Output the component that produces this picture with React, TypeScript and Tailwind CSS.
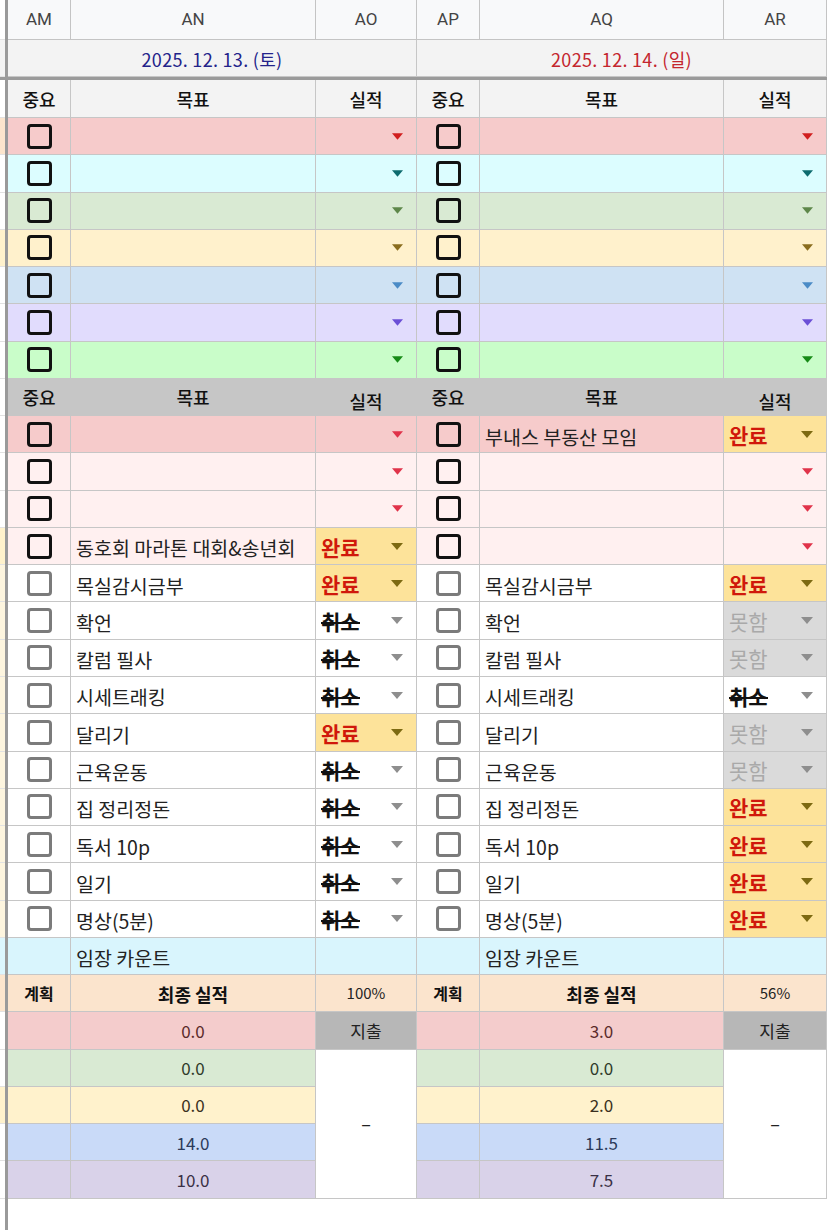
import React from "react";

const B = "border-r border-b border-[#c6c6c6]";

function Arrow({ color, w = 12 }: { color: string; w?: number }) {
  return (
    <svg width={w} height={7} viewBox="0 0 12 7" className="shrink-0">
      <polygon points="0,0 12,0 6,7" fill={color} />
    </svg>
  );
}

function Box({ strong }: { strong: boolean }) {
  return strong ? (
    <div className="w-[25px] h-[25px] border-[3px] border-[#111] rounded-[4px]" />
  ) : (
    <div className="w-[25px] h-[25px] border-[3px] border-[#7b7b7b] rounded-[4px]" />
  );
}

type Status = "완료" | "취소" | "못함" | null;

function StatusCell({ s, bg, arrow }: { s: Status; bg: string; arrow: string }) {
  if (s === "완료")
    return (
      <div className={`${B} bg-[#fde39a] flex items-center justify-between pl-[5px] pr-[13px]`}>
        <span className="text-[21px] font-bold text-[#d0180b] leading-none pt-[2px]">완료</span>
        <Arrow color="#7d6a12" />
      </div>
    );
  if (s === "취소")
    return (
      <div className={`${B} bg-white flex items-center justify-between pl-[5px] pr-[13px]`}>
        <span className="relative text-[21px] font-bold text-[#111] leading-none pt-[2px]">
          취소
          <span className="absolute left-0 right-0 top-[13px] h-[2px] bg-[#111]" />
        </span>
        <Arrow color="#8e8e8e" />
      </div>
    );
  if (s === "못함")
    return (
      <div className={`${B} bg-[#dadada] flex items-center justify-between pl-[5px] pr-[13px]`}>
        <span className="text-[21px] text-[#a9a9a9] leading-none pt-[2px]">못함</span>
        <Arrow color="#8e8e8e" />
      </div>
    );
  return (
    <div className={`${B} ${bg} flex items-center justify-end pr-[13px]`}>
      <Arrow color={arrow} w={11} />
    </div>
  );
}

function Strip({ bg }: { bg: string }) {
  return (
    <>
      <div className={`${bg} border-b border-[#e2e2e2]`} />
      <div className="bg-[#9a9a9a]" />
    </>
  );
}

const colorRows = [
  { bg: "bg-[#f6cbcb]", arrow: "#d11f1f", strip: "bg-[#fce5cd]" },
  { bg: "bg-[#dcfdff]", arrow: "#0e6b6e", strip: "bg-white" },
  { bg: "bg-[#d9ead3]", arrow: "#5e874a", strip: "bg-white" },
  { bg: "bg-[#fff1cc]", arrow: "#8a6d1e", strip: "bg-[#fff2cc]" },
  { bg: "bg-[#cfe2f3]", arrow: "#4b8bc6", strip: "bg-white" },
  { bg: "bg-[#e1dcfd]", arrow: "#6a4fd6", strip: "bg-white" },
  { bg: "bg-[#c9fdc9]", arrow: "#178a17", strip: "bg-white" },
];

type S2 = { bg: string; text: string; status: Status };
const sec2Left: S2[] = [
  { bg: "bg-[#f6cbcb]", text: "", status: null },
  { bg: "bg-[#fff0f0]", text: "", status: null },
  { bg: "bg-[#fff0f0]", text: "", status: null },
  { bg: "bg-[#fff0f0]", text: "동호회 마라톤 대회&송년회", status: "완료" },
];
const sec2Right: S2[] = [
  { bg: "bg-[#f6cbcb]", text: "부내스 부동산 모임", status: "완료" },
  { bg: "bg-[#fff0f0]", text: "", status: null },
  { bg: "bg-[#fff0f0]", text: "", status: null },
  { bg: "bg-[#fff0f0]", text: "", status: null },
];

const habits = ["목실감시금부", "확언", "칼럼 필사", "시세트래킹", "달리기", "근육운동", "집 정리정돈", "독서 10p", "일기", "명상(5분)"];
const leftStatus: Status[] = ["완료", "취소", "취소", "취소", "완료", "취소", "취소", "취소", "취소", "취소"];
const rightStatus: Status[] = ["완료", "못함", "못함", "취소", "못함", "못함", "완료", "완료", "완료", "완료"];

const bottomColors = ["bg-[#f4cccc]", "bg-[#d9ead3]", "bg-[#fff2cc]", "bg-[#c9daf8]", "bg-[#d9d2e9]"];
const bottomText = ["text-[#5a2a2a]", "text-[#2f3a2a]", "text-[#3a3020]", "text-[#2c3a5a]", "text-[#3a3045]"];
const leftNums = ["0.0", "0.0", "0.0", "14.0", "10.0"];
const rightNums = ["3.0", "0.0", "2.0", "11.5", "7.5"];

function HeaderCells({ gray }: { gray: boolean }) {
  const bg = gray ? "bg-[#c6c6c6]" : "bg-[#f3f3f3]";
  const cell = `${B} ${bg} flex items-center justify-center text-[18px] font-medium text-[#111] leading-none`;
  return (
    <>
      {[0, 1].map((d) => (
        <React.Fragment key={d}>
          <div className={cell}>중요</div>
          <div className={cell}>목표</div>
          <div className={`${cell} ${gray ? "pt-[8px]" : ""}`}>실적</div>
        </React.Fragment>
      ))}
    </>
  );
}

export default function App() {
  const letters = ["AM", "AN", "AO", "AP", "AQ", "AR"];
  const textCell = "flex items-center pl-[5px] pt-[4px] text-[19.5px] text-[#222] whitespace-nowrap";
  return (
    <div className="w-[827px] h-[1230px] overflow-hidden bg-white font-['Noto_Sans_CJK_KR','Noto_Sans',sans-serif] text-[#111]">
      <div className="grid grid-cols-[5px_3px_63px_245px_101px_63px_244px_1fr] grid-rows-[40px_37px_3px_38px_repeat(29,37.28px)_31px]">
        {/* column letters */}
        <Strip bg="bg-white" />
        {letters.map((l) => (
          <div key={l} className="border-r border-b border-[#c4c4c4] bg-[#f8f9fa] flex items-center justify-center text-[17px] text-[#444] font-['Roboto',sans-serif]">
            {l}
          </div>
        ))}

        {/* date row */}
        <Strip bg="bg-[#f3f3f3]" />
        <div className={`col-span-3 ${B} bg-[#f3f3f3] flex items-center justify-center text-[18px] tracking-[0.3px] text-[#23238a] pt-[2px]`}>
          2025. 12. 13. (토)
        </div>
        <div className={`col-span-3 ${B} bg-[#f3f3f3] flex items-center justify-center text-[18px] tracking-[0.3px] text-[#c4262e] pt-[2px]`}>
          2025. 12. 14. (일)
        </div>

        {/* thick line */}
        <div className="col-span-8 bg-[#9a9a9a]" />

        {/* header */}
        <Strip bg="bg-white" />
        <HeaderCells gray={false} />

        {/* color rows */}
        {colorRows.map((r, i) => (
          <React.Fragment key={`c${i}`}>
            <Strip bg={r.strip} />
            {[0, 1].map((d) => (
              <React.Fragment key={d}>
                <div className={`${B} ${r.bg} flex items-center justify-center`}>
                  <Box strong />
                </div>
                <div className={`${B} ${r.bg}`} />
                <StatusCell s={null} bg={r.bg} arrow={r.arrow} />
              </React.Fragment>
            ))}
          </React.Fragment>
        ))}

        {/* gray header */}
        <Strip bg="bg-white" />
        <HeaderCells gray />

        {/* section 2 */}
        {sec2Left.map((l, i) => {
          const r = sec2Right[i];
          return (
            <React.Fragment key={`s${i}`}>
              <Strip bg={i === 3 ? "bg-[#fff2cc]" : "bg-white"} />
              {[l, r].map((c, d) => (
                <React.Fragment key={d}>
                  <div className={`${B} ${c.bg} flex items-center justify-center`}>
                    <Box strong />
                  </div>
                  <div className={`${B} ${c.bg} ${textCell}`}>{c.text}</div>
                  <StatusCell s={c.status} bg={c.bg} arrow="#e0334a" />
                </React.Fragment>
              ))}
            </React.Fragment>
          );
        })}

        {/* habits */}
        {habits.map((h, i) => (
          <React.Fragment key={`h${i}`}>
            <Strip bg="bg-[#fdf5df]" />
            {[leftStatus[i], rightStatus[i]].map((s, d) => (
              <React.Fragment key={d}>
                <div className={`${B} bg-white flex items-center justify-center`}>
                  <Box strong={false} />
                </div>
                <div className={`${B} bg-white ${textCell}`}>{h}</div>
                <StatusCell s={s} bg="bg-white" arrow="#8e8e8e" />
              </React.Fragment>
            ))}
          </React.Fragment>
        ))}

        {/* 임장 카운트 */}
        <Strip bg="bg-[#dcf6fd]" />
        {[0, 1].map((d) => (
          <React.Fragment key={`i${d}`}>
            <div className={`${B} bg-[#d9f5fd]`} />
            <div className={`${B} bg-[#d9f5fd] ${textCell}`}>임장 카운트</div>
            <div className={`${B} bg-[#d9f5fd]`} />
          </React.Fragment>
        ))}

        {/* 계획 */}
        <Strip bg="bg-[#fce5cd]" />
        {["100%", "56%"].map((p, d) => (
          <React.Fragment key={`p${d}`}>
            <div className={`${B} bg-[#fbe4cd] flex items-center justify-center text-[16px] font-bold`}>계획</div>
            <div className={`${B} bg-[#fbe4cd] flex items-center justify-center text-[18px] font-bold pt-[2px]`}>최종 실적</div>
            <div className={`${B} bg-[#fbe4cd] flex items-center justify-center text-[15px] text-[#222]`}>{p}</div>
          </React.Fragment>
        ))}

        {/* bottom rows */}
        {bottomColors.map((bg, i) => (
          <React.Fragment key={`b${i}`}>
            <Strip bg={i === 2 ? "bg-[#fff2cc]" : "bg-white"} />
            <div className={`${B} ${bg}`} />
            <div className={`${B} ${bg} flex items-center justify-center text-[17px] ${bottomText[i]}`}>{leftNums[i]}</div>
            {i === 0 && (
              <div className={`${B} bg-[#b7b7b7] flex items-center justify-center text-[17px] text-[#222]`}>지출</div>
            )}
            {i === 1 && (
              <div className={`row-span-4 ${B} bg-white flex items-center justify-center text-[18px] text-[#222]`}>–</div>
            )}
            <div className={`col-start-6 ${B} ${bg}`} />
            <div className={`${B} ${bg} flex items-center justify-center text-[17px] ${bottomText[i]}`}>{rightNums[i]}</div>
            {i === 0 && (
              <div className={`${B} bg-[#b7b7b7] flex items-center justify-center text-[17px] text-[#222]`}>지출</div>
            )}
            {i === 1 && (
              <div className={`row-span-4 ${B} bg-white flex items-center justify-center text-[18px] text-[#222]`}>–</div>
            )}
          </React.Fragment>
        ))}

        {/* trailing white */}
        <div className="bg-white" />
        <div className="bg-[#9a9a9a]" />
        <div className="col-span-6 bg-white" />
      </div>
    </div>
  );
}
